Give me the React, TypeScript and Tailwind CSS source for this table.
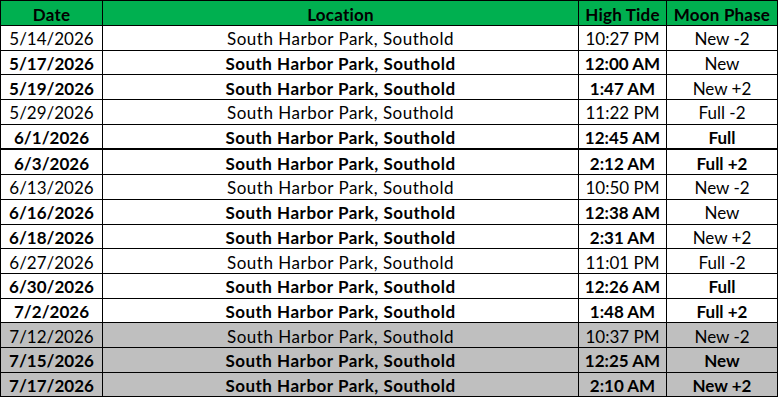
const rows = [
  { date: '5/14/2026', tide: '10:27 PM', moon: 'New -2', bold: false, moonBold: false, gray: false },
  { date: '5/17/2026', tide: '12:00 AM', moon: 'New', bold: true, moonBold: false, gray: false },
  { date: '5/19/2026', tide: '1:47 AM', moon: 'New +2', bold: true, moonBold: false, gray: false },
  { date: '5/29/2026', tide: '11:22 PM', moon: 'Full -2', bold: false, moonBold: false, gray: false },
  { date: '6/1/2026', tide: '12:45 AM', moon: 'Full', bold: true, moonBold: true, gray: false },
  { date: '6/3/2026', tide: '2:12 AM', moon: 'Full +2', bold: true, moonBold: true, gray: false, thick: true },
  { date: '6/13/2026', tide: '10:50 PM', moon: 'New -2', bold: false, moonBold: false, gray: false },
  { date: '6/16/2026', tide: '12:38 AM', moon: 'New', bold: true, moonBold: false, gray: false },
  { date: '6/18/2026', tide: '2:31 AM', moon: 'New +2', bold: true, moonBold: false, gray: false },
  { date: '6/27/2026', tide: '11:01 PM', moon: 'Full -2', bold: false, moonBold: false, gray: false },
  { date: '6/30/2026', tide: '12:26 AM', moon: 'Full', bold: true, moonBold: true, gray: false },
  { date: '7/2/2026', tide: '1:48 AM', moon: 'Full +2', bold: true, moonBold: true, gray: false },
  { date: '7/12/2026', tide: '10:37 PM', moon: 'New -2', bold: false, moonBold: false, gray: true },
  { date: '7/15/2026', tide: '12:25 AM', moon: 'New', bold: true, moonBold: true, gray: true },
  { date: '7/17/2026', tide: '2:10 AM', moon: 'New +2', bold: true, moonBold: true, gray: true },
];

const cols = 'grid grid-cols-[101px_475px_87px_110px] gap-px';

export default function App() {
  return (
    <div className="w-[780px] h-[398px] bg-white" style={{ fontFamily: 'Lato, "Open Sans", sans-serif' }}>
      <div className="w-[778px] flex flex-col gap-px bg-black p-px text-[17px] text-black leading-none">
        {/* Header */}
        <div className={cols}>
          {['Date', 'Location', 'High Tide', 'Moon Phase'].map(h => (
            <div key={h} className="h-[24px] bg-[#00b050] flex items-center justify-center pt-[2px] font-bold tracking-[0.2px]">
              {h}
            </div>
          ))}
        </div>

        {rows.map(r => {
          const bg = r.gray ? 'bg-[#bfbfbf]' : 'bg-white';
          const w = r.bold ? 'font-bold' : 'font-normal';
          return (
            <div key={r.date} className={`${cols} ${r.thick ? 'mt-px' : ''}`}>
              <div className={`h-[23.7px] ${bg} ${w} flex items-center justify-center pt-[2px]`}>{r.date}</div>
              <div className={`h-[23.7px] ${bg} ${w} flex items-center justify-center pt-[2px] tracking-[0.5px]`}>South Harbor Park, Southold</div>
              <div className={`h-[23.7px] ${bg} ${w} flex items-center justify-center pt-[2px]`}>{r.tide}</div>
              <div className={`h-[23.7px] ${bg} ${r.moonBold ? 'font-bold' : 'font-normal'} flex items-center justify-center pt-[2px]`}>{r.moon}</div>
            </div>
          );
        })}
      </div>
    </div>
  );
}
